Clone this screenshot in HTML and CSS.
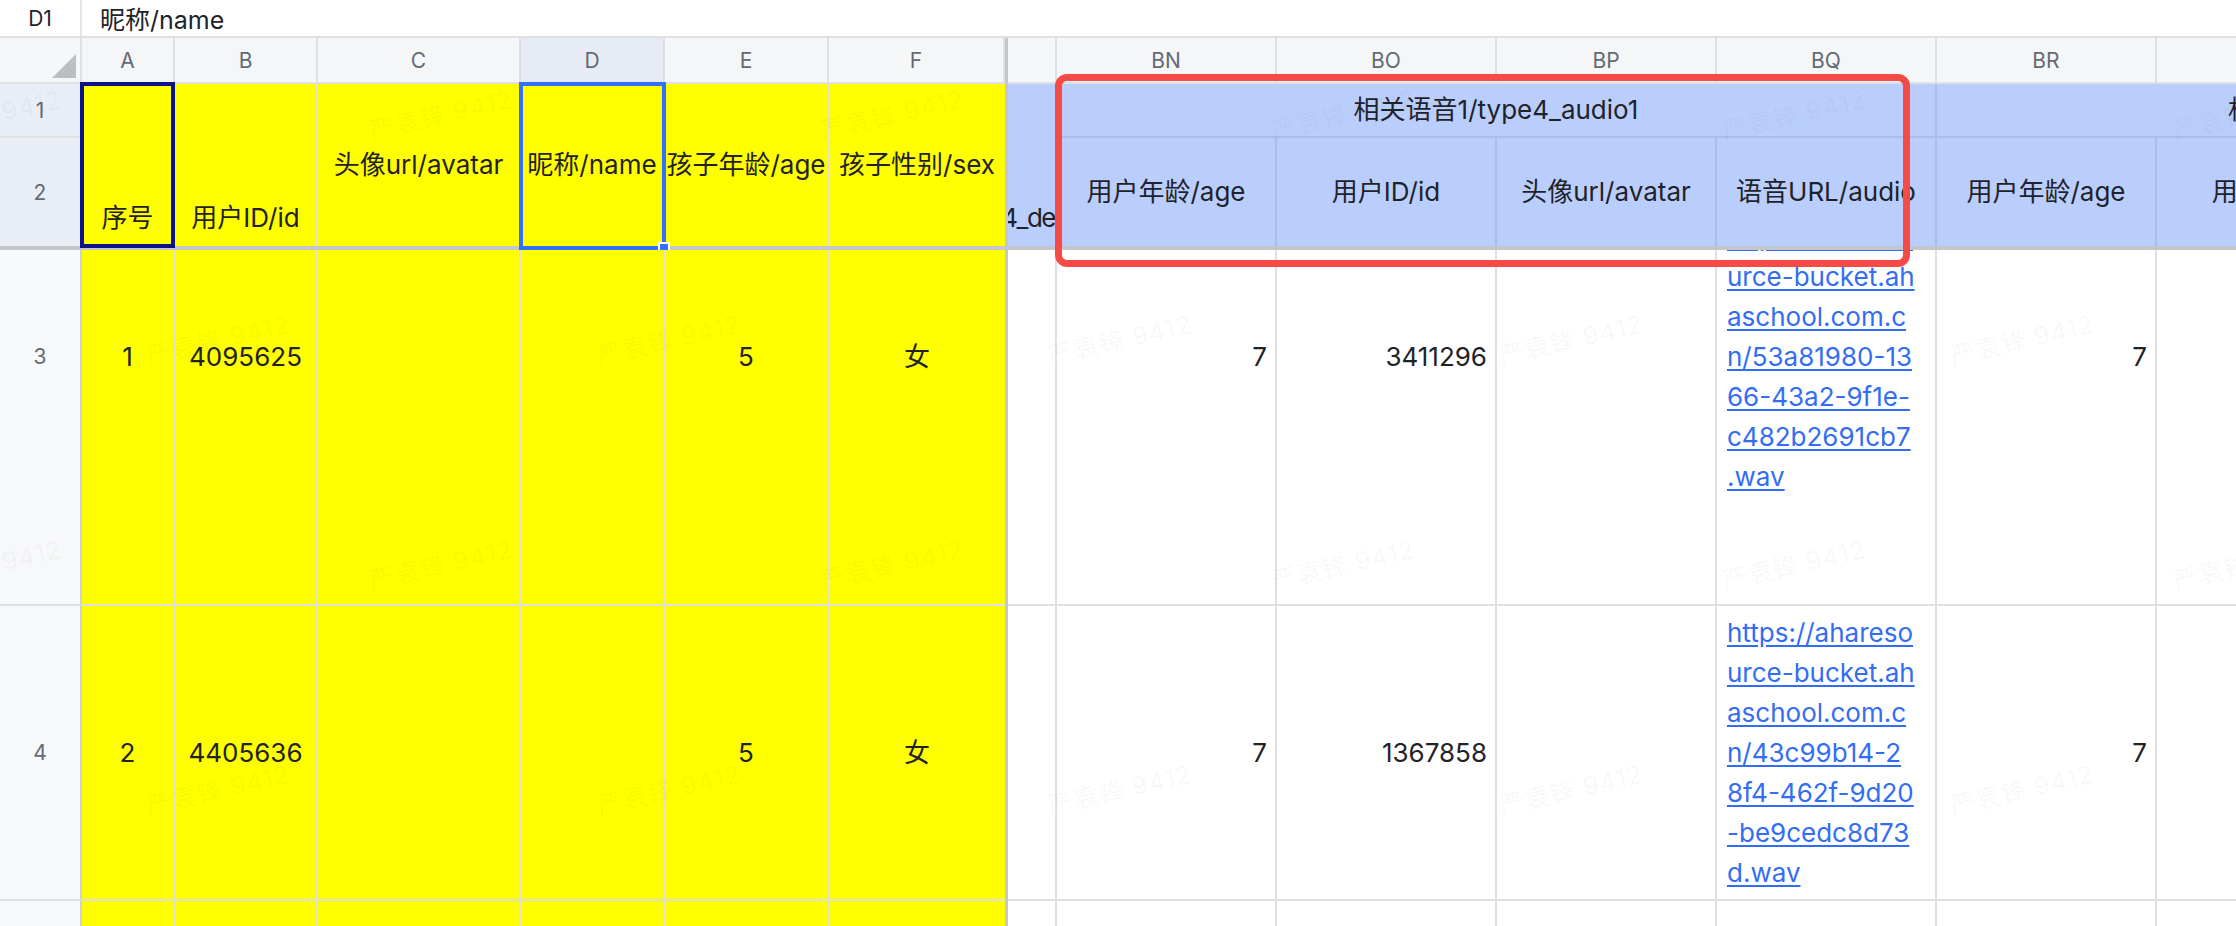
FILE: index.html
```html
<!DOCTYPE html>
<html lang="zh-CN">
<head>
<meta charset="utf-8">
<title>Sheet</title>
<link rel="stylesheet" href="styles.css">
</head>
<body>
<div class="formula-bar">
  <div class="cell-ref">D1</div>
  <div class="formula">昵称/name</div>
</div>

<div class="sheet-top cols">
  <div class="corner"><svg width="24" height="24" viewBox="0 0 24 24"><polygon points="24,0 24,24 0,24" fill="#bbbfc4"/></svg></div>
  <div class="ch">A</div>
  <div class="ch">B</div>
  <div class="ch">C</div>
  <div class="ch sel">D</div>
  <div class="ch">E</div>
  <div class="ch">F</div>
  <div class="freeze-v top"></div>
  <div class="ch"></div>
  <div class="ch">BN</div>
  <div class="ch">BO</div>
  <div class="ch">BP</div>
  <div class="ch">BQ</div>
  <div class="ch">BR</div>
  <div class="ch">BS</div>
  <div class="ch">BT</div>
  <div class="ch">BU</div>

  <div class="rh sel line">1</div>
  <div class="cell y rows2 bottom sel-a">序号</div>
  <div class="cell y rows2 bottom">用户ID/id</div>
  <div class="cell y rows2">头像url/avatar</div>
  <div class="cell y rows2 sel-d">昵称/name<span class="handle"></span></div>
  <div class="cell y rows2">孩子年龄/age</div>
  <div class="cell y rows2 last">孩子性别/sex</div>
  <div class="cell b rows2 bottom clip end tight">type4_de</div>
  <div class="cell b group">相关语音1/type4_audio1<div class="callout"></div></div>
  <div class="cell b group">相关语音2/type4_audio2</div>

  <div class="rh sel">2</div>
  <div class="cell b">用户年龄/age</div>
  <div class="cell b">用户ID/id</div>
  <div class="cell b">头像url/avatar</div>
  <div class="cell b">语音URL/audio</div>
  <div class="cell b">用户年龄/age</div>
  <div class="cell b">用户ID/id</div>
  <div class="cell b">头像url/avatar</div>
  <div class="cell b">语音URL/audio</div>

  <div class="freeze-h"></div>
</div>

<div class="sheet-body">
  <div class="body-grid cols">
    <div class="rh line">3</div>
    <div class="cell y line">1</div>
    <div class="cell y line">4095625</div>
    <div class="cell y line"></div>
    <div class="cell y line"></div>
    <div class="cell y line">5</div>
    <div class="cell y line last">女</div>
    <div class="freeze-v all"></div>
    <div class="cell w"></div>
    <div class="cell w num">7</div>
    <div class="cell w num">3411296</div>
    <div class="cell w"></div>
    <div class="cell w link-cell"><a class="link" href="#">https://ahareso<br>urce-bucket.ah<br>aschool.com.c<br>n/53a81980-13<br>66-43a2-9f1e-<br>c482b2691cb7<br>.wav</a></div>
    <div class="cell w num">7</div>
    <div class="cell w"></div>
    <div class="cell w"></div>
    <div class="cell w"></div>

    <div class="rh line">4</div>
    <div class="cell y line">2</div>
    <div class="cell y line">4405636</div>
    <div class="cell y line"></div>
    <div class="cell y line"></div>
    <div class="cell y line">5</div>
    <div class="cell y line last">女</div>
    <div class="cell w"></div>
    <div class="cell w num">7</div>
    <div class="cell w num">1367858</div>
    <div class="cell w"></div>
    <div class="cell w link-cell"><a class="link" href="#">https://ahareso<br>urce-bucket.ah<br>aschool.com.c<br>n/43c99b14-2<br>8f4-462f-9d20<br>-be9cedc8d73<br>d.wav</a></div>
    <div class="cell w num">7</div>
    <div class="cell w"></div>
    <div class="cell w"></div>
    <div class="cell w"></div>

    <div class="rh line">5</div>
    <div class="cell y line"></div>
    <div class="cell y line"></div>
    <div class="cell y line"></div>
    <div class="cell y line"></div>
    <div class="cell y line"></div>
    <div class="cell y line last"></div>
    <div class="cell w"></div>
    <div class="cell w"></div>
    <div class="cell w"></div>
    <div class="cell w"></div>
    <div class="cell w"></div>
    <div class="cell w"></div>
    <div class="cell w"></div>
    <div class="cell w"></div>
    <div class="cell w"></div>
  </div>
</div>

<div class="watermarks">
  <div class="wm-row even"><span class="wm">严袁锋 9412</span><span class="wm">严袁锋 9412</span><span class="wm">严袁锋 9412</span><span class="wm">严袁锋 9412</span><span class="wm">严袁锋 9412</span><span class="wm">严袁锋 9412</span></div>
  <div class="wm-row odd"><span class="wm">严袁锋 9412</span><span class="wm">严袁锋 9412</span><span class="wm">严袁锋 9412</span><span class="wm">严袁锋 9412</span><span class="wm">严袁锋 9412</span></div>
  <div class="wm-row even"><span class="wm">严袁锋 9412</span><span class="wm">严袁锋 9412</span><span class="wm">严袁锋 9412</span><span class="wm">严袁锋 9412</span><span class="wm">严袁锋 9412</span><span class="wm">严袁锋 9412</span></div>
  <div class="wm-row odd"><span class="wm">严袁锋 9412</span><span class="wm">严袁锋 9412</span><span class="wm">严袁锋 9412</span><span class="wm">严袁锋 9412</span><span class="wm">严袁锋 9412</span></div>
  <div class="wm-row even"><span class="wm">严袁锋 9412</span><span class="wm">严袁锋 9412</span><span class="wm">严袁锋 9412</span><span class="wm">严袁锋 9412</span><span class="wm">严袁锋 9412</span><span class="wm">严袁锋 9412</span></div>
</div>
</body>
</html>
```

FILE: styles.css
```css
* { box-sizing: border-box; }

html, body { margin: 0; padding: 0; }

body {
  width: 2236px;
  height: 926px;
  overflow: hidden;
  position: relative;
  background: #ffffff;
  color: #1f2329;
  font-family: "Inter", "Noto Sans CJK SC", sans-serif;
}

/* formula bar */
.formula-bar {
  display: flex;
  height: 38px;
  border-bottom: 2px solid #dee0e3;
}
.cell-ref {
  width: 82px;
  flex: none;
  border-right: 2px solid #e4e5e7;
  display: flex;
  align-items: center;
  justify-content: center;
  font-size: 21px;
}
.formula {
  display: flex;
  align-items: center;
  padding-left: 18px;
  font-size: 25px;
}

/* grid columns shared by both panes */
.cols {
  display: grid;
  grid-template-columns: 82px 93px 143px 203px 144px 164px 176px 3px 49px repeat(8, 220px);
}

.sheet-top {
  grid-template-rows: 46px 54px 108px 4px;
}

.sheet-body {
  height: 676px;
  overflow: hidden;
}
.body-grid {
  grid-template-rows: 497px 295px 295px;
  margin-top: -141px;
}

/* headers */
.corner {
  background: #f5f6f7;
  border-right: 2px solid #dee0e3;
  border-bottom: 2px solid #dee0e3;
  display: flex;
  align-items: flex-end;
  justify-content: flex-end;
  padding: 0 4px 4px 0;
}
.corner svg { display: block; }

.ch {
  background: #f5f6f7;
  border-right: 2px solid #dee0e3;
  border-bottom: 2px solid #dee0e3;
  display: flex;
  align-items: center;
  justify-content: center;
  font-size: 21px;
  color: #646a73;
}
.ch.sel { background: #e6ebf5; }

.rh {
  background: #f7f8fa;
  border-right: 2px solid #cdd0d5;
  display: flex;
  align-items: center;
  justify-content: center;
  font-size: 21px;
  color: #646a73;
}
.rh.sel { background: #e9edf6; }
.rh.line { border-bottom: 2px solid #dee0e3; }

.freeze-v { background: #c3c6cb; grid-column: 8; }
.freeze-v.top { grid-row: 1 / 4; }
.freeze-v.all { grid-row: 1 / -1; }
.freeze-h { background: #c3c6cb; grid-column: 1 / -1; grid-row: 4; }

/* cells */
.cell {
  display: flex;
  align-items: center;
  justify-content: center;
  text-align: center;
  font-size: 26px;
  line-height: 34px;
  white-space: nowrap;
  position: relative;
  min-width: 0;
}
.rows2 { grid-row: span 2; }
.group { grid-column: span 4; border-bottom: 2px solid #a9bde9; }
.bottom { align-items: flex-end; padding-bottom: 11px; }
.clip { overflow: hidden; }
.end { justify-content: flex-end; }
.tight { letter-spacing: -1.5px; }

.y { background: #ffff00; border-right: 2px solid #e0e0da; }
.y.line { border-bottom: 2px solid #e0e0da; }
.y.last { border-right: 0; }

.b { background: #bacefd; border-right: 2px solid #a9bde9; }

.w { background: #ffffff; border-right: 2px solid #dee0e3; border-bottom: 2px solid #dee0e3; }

.num { justify-content: flex-end; padding-right: 8px; }

.link-cell {
  justify-content: flex-start;
  padding-left: 10px;
  text-align: left;
}
.link {
  color: #336df4;
  text-decoration: underline;
  text-underline-offset: 3px;
  line-height: 40px;
  font-size: 26px;
}

/* selections */
.sel-a::after {
  content: "";
  position: absolute;
  left: -2px; top: -2px; right: -2px; bottom: -2px;
  border: 4px solid #0c1289;
  z-index: 2;
  pointer-events: none;
}
.sel-d::after {
  content: "";
  position: absolute;
  left: -2px; top: -2px; right: -3px; bottom: -4px;
  border: 4px solid #3370ff;
  z-index: 2;
  pointer-events: none;
}
.handle {
  position: absolute;
  right: -7px;
  bottom: -4px;
  width: 12px;
  height: 8px;
  background: #3370ff;
  border: 2px solid #ffffff;
  border-bottom: 0;
  z-index: 3;
}

/* annotation */
.callout {
  position: absolute;
  left: -2px;
  top: -10px;
  width: 855px;
  height: 193px;
  border: 7px solid #f54a45;
  border-radius: 12px;
  z-index: 5;
  pointer-events: none;
}

/* watermark overlay */
.watermarks {
  position: absolute;
  left: 0; top: 0; right: 0; bottom: 0;
  overflow: hidden;
  pointer-events: none;
  z-index: 20;
  display: flex;
  flex-direction: column;
}
.wm-row {
  flex: none;
  height: 225px;
  display: flex;
  align-items: center;
}
.wm-row.even { margin-left: -236px; }
.wm-row.odd { margin-left: -8px; }
.wm {
  flex: none;
  width: 451px;
  text-align: center;
  white-space: nowrap;
  font-size: 25px;
  letter-spacing: 1px;
  color: rgba(31, 35, 41, 0.045);
  transform: rotate(-13deg);
}
```
